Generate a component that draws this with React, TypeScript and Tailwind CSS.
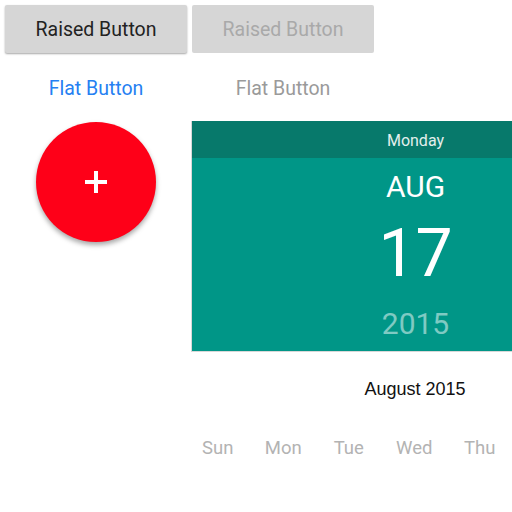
const days = ["Sun", "Mon", "Tue", "Wed", "Thu", "Fri", "Sat"];

const raised =
  "flex h-[48px] w-[182px] items-center justify-center rounded-[2px] bg-[#d6d6d6] pt-[2px] text-[19.5px] shadow-[0_1px_2px_rgba(0,0,0,0.35)]";

export default function App() {
  return (
    <div className="h-[512px] w-[512px] overflow-hidden bg-white font-['Roboto',sans-serif]">
      <div className="flex gap-[5px] pl-[5px] pt-[5px]">
        <button type="button" className={`${raised} text-[#222]`}>
          Raised Button
        </button>
        <button type="button" className={`${raised} text-[#a9a9a9] shadow-none`}>
          Raised Button
        </button>
      </div>

      <div className="mt-[11px] flex gap-[5px] pl-[5px]">
        <button type="button" className="flex h-[48px] w-[182px] items-center justify-center pt-[2px] text-[19.5px] text-[#2580f2]">
          Flat Button
        </button>
        <button type="button" className="flex h-[48px] w-[182px] items-center justify-center pt-[2px] text-[19.5px] text-[#9a9a9a]">
          Flat Button
        </button>
      </div>

      <div className="mt-[9px] flex">
        <div className="flex w-[191px] shrink-0 justify-center pt-[1px] pl-[1px]">
          <button
            type="button"
            className="flex h-[120px] w-[120px] items-center justify-center rounded-full bg-[#fe0018] shadow-[0_3px_5px_rgba(0,0,0,0.35)]"
          >
            <svg width="24" height="24" viewBox="0 0 24 24">
              <path d="M10 1h4v9h9v4h-9v9h-4v-9H1v-4h9z" fill="white" />
            </svg>
          </button>
        </div>

        <div className="w-[448px] shrink-0">
          <div className="border-b border-l border-[#d8d8d8]">
            <div className="flex h-[37px] items-center justify-center pt-[3px] text-[16px] bg-[#07796b] text-[#e3efed]">
              Monday
            </div>
            <div className="flex h-[193px] flex-col items-center bg-[#009687] text-white">
              <div className="mt-[8px] flex h-[40px] items-center text-[30px]">AUG</div>
              <div className="mt-[8px] flex h-[80px] items-center text-[66px] leading-none">17</div>
              <div className="mt-[11px] flex h-[36px] items-center text-[30px] text-white/50">2015</div>
            </div>
          </div>

          <div className="mt-[22px] flex h-[30px] items-center justify-center font-['Liberation_Sans',sans-serif] text-[18px] text-[#111]">
            August 2015
          </div>

          <div className="-ml-[6px] mt-[30px] grid h-[30px] grid-cols-[repeat(7,65.5px)] items-center text-[18.5px] text-[#b3b3b3]">
            {days.map((d) => (
              <div key={d} className="text-center">
                {d}
              </div>
            ))}
          </div>
        </div>
      </div>
    </div>
  );
}
